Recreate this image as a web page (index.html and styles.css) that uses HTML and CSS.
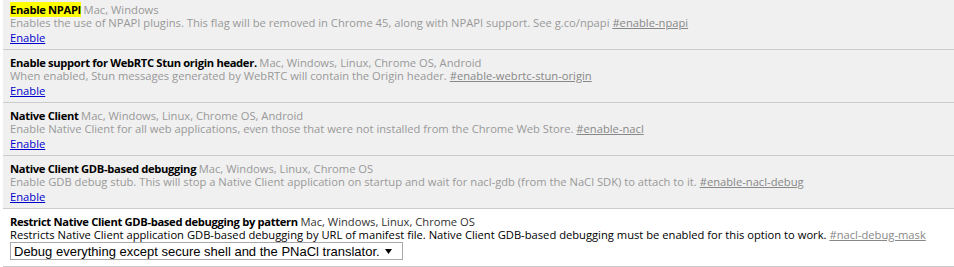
FILE: index.html
```html
<!DOCTYPE html>
<html lang="en">
<head>
    <meta charset="UTF-8">
    <title>Flags</title>
    <link rel="stylesheet" href="styles.css">
</head>
<body>

    <div class="flags">
        <div class="experiment disabled">
            <div class="experiment-name"><span class="highlight">Enable NPAPI</span> <span class="platforms">Mac, Windows</span></div>
            <div class="experiment-desc">Enables the use of NPAPI plugins. This flag will be removed in Chrome 45, along with NPAPI support. See g.co/npapi <a class="permalink" href="#enable-npapi">#enable-npapi</a></div>
            <div class="experiment-actions"><a href="#">Enable</a></div>
        </div>

        <div class="experiment disabled">
            <div class="experiment-name">Enable support for WebRTC Stun origin header. <span class="platforms">Mac, Windows, Linux, Chrome OS, Android</span></div>
            <div class="experiment-desc">When enabled, Stun messages generated by WebRTC will contain the Origin header. <a class="permalink" href="#enable-webrtc-stun-origin">#enable-webrtc-stun-origin</a></div>
            <div class="experiment-actions"><a href="#">Enable</a></div>
        </div>

        <div class="experiment disabled">
            <div class="experiment-name">Native Client <span class="platforms">Mac, Windows, Linux, Chrome OS, Android</span></div>
            <div class="experiment-desc">Enable Native Client for all web applications, even those that were not installed from the Chrome Web Store. <a class="permalink" href="#enable-nacl">#enable-nacl</a></div>
            <div class="experiment-actions"><a href="#">Enable</a></div>
        </div>

        <div class="experiment disabled">
            <div class="experiment-name">Native Client GDB-based debugging <span class="platforms">Mac, Windows, Linux, Chrome OS</span></div>
            <div class="experiment-desc">Enable GDB debug stub. This will stop a Native Client application on startup and wait for nacl-gdb (from the NaCl SDK) to attach to it. <a class="permalink" href="#enable-nacl-debug">#enable-nacl-debug</a></div>
            <div class="experiment-actions"><a href="#">Enable</a></div>
        </div>

        <div class="experiment">
            <div class="experiment-name">Restrict Native Client GDB-based debugging by pattern <span class="platforms">Mac, Windows, Linux, Chrome OS</span></div>
            <div class="experiment-desc">Restricts Native Client application GDB-based debugging by URL of manifest file. Native Client GDB-based debugging must be enabled for this option to work. <a class="permalink" href="#nacl-debug-mask">#nacl-debug-mask</a></div>
            <div class="experiment-actions">
                <span class="select-wrap">
                    <select>
                        <option>Debug everything except secure shell and the PNaCl translator.</option>
                        <option>Debug only if manifest URL ends with debug.nmf</option>
                        <option>Debug everything.</option>
                    </select>
                    <svg class="select-arrow" width="7" height="5" viewBox="0 0 7 5"><path d="M0 0H7L3.5 5Z" fill="#000"/></svg>
                </span>
            </div>
        </div>
    </div>

</body>
</html>
```

FILE: styles.css
```css
body {
    margin: 0;
    background-color: #fff;
    font-family: 'Open Sans', 'Noto Sans', sans-serif;
    font-size: 11.2px;
    color: #000;
}
.flags {
    margin: -3px 0 0 3px;
}
.experiment {
    padding: 6px 0 5px 7px;
    border-bottom: 1px solid #ccc;
    line-height: 13px;
}
.experiment.disabled {
    background-color: #f0f0f0;
}
.experiment-name {
    font-weight: bold;
    letter-spacing: -0.33px;
    white-space: nowrap;
}
.platforms {
    font-weight: normal;
    letter-spacing: normal;
    color: #333;
}
.highlight {
    background-color: #ff0;
}
.experiment-desc {
    white-space: nowrap;
}
.disabled .platforms,
.disabled .experiment-desc {
    color: #999;
}
.permalink {
    color: #888;
}
.experiment-actions {
    margin-top: 2px;
}
.experiment-actions a {
    color: #00c;
}
.experiment:last-child {
    padding-bottom: 6px;
}
.experiment:last-child .experiment-actions {
    margin-top: 1px;
    line-height: normal;
}
/* select with its own arrow */
.select-wrap {
    position: relative;
    display: inline-block;
}
select {
    -webkit-appearance: none;
    appearance: none;
    width: 393px;
    height: 18px;
    margin: 0;
    padding: 0 0 0 3px;
    border: 1px solid #a9a9a9;
    border-radius: 0;
    background-color: #fff;
    font-family: 'Liberation Sans', Arial, sans-serif;
    font-size: 13px;
    color: #000;
    display: block;
}
.select-arrow {
    position: absolute;
    right: 11px;
    top: 7px;
    pointer-events: none;
}
```
